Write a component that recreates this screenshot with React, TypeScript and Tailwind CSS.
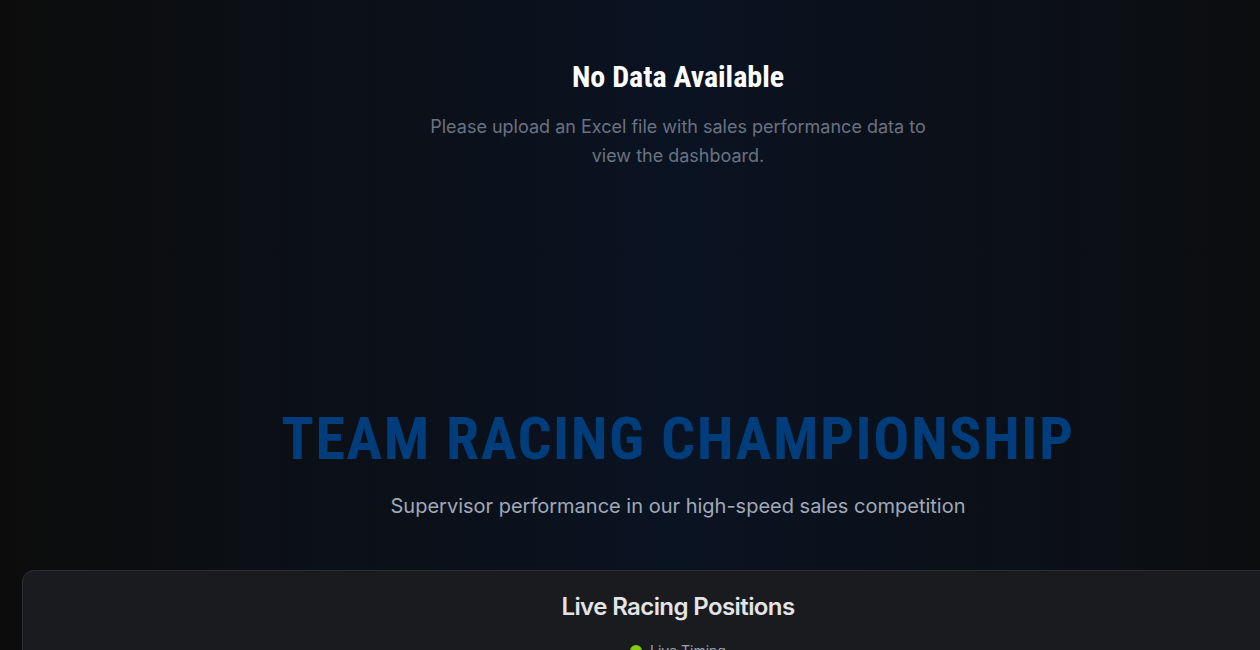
export default function App() {
  return (
    <div className="min-h-screen w-[1356px] overflow-hidden bg-[#0c0c0c] bg-gradient-to-r from-[#0c0c0c] via-[#0a1322] to-[#0c0c0c] font-['Inter',sans-serif]">
      {/* Empty state */}
      <div className="flex flex-col items-center pt-[59px] text-center">
        <h2 className="font-['Roboto_Condensed','Roboto',sans-serif] text-3xl font-bold text-white">
          No Data Available
        </h2>
        <p className="mt-[17px] max-w-[512px] text-lg leading-[29px] text-[#6b7280]">
          Please upload an Excel file with sales performance data to view the dashboard.
        </p>
      </div>

      {/* Hero */}
      <div className="mt-[239px] flex flex-col items-center text-center">
        <h1 className="font-['Roboto_Condensed','Roboto',sans-serif] text-6xl leading-none font-bold tracking-wide text-[#003d7a]">
          TEAM RACING CHAMPIONSHIP
        </h1>
        <p className="mt-[23px] text-xl text-[#a1a9b8]">
          Supervisor performance in our high-speed sales competition
        </p>
      </div>

      {/* Positions card */}
      <div className="mx-[22px] mt-[50px] rounded-xl border border-[#2c2e33] bg-[#1a1b1e] pt-[20px] pb-10">
        <h3 className="text-center text-2xl font-semibold tracking-tight text-[#e4e4e7]">Live Racing Positions</h3>
        <div className="mt-[18px] flex items-center justify-center gap-2 text-sm text-[#9ca3af]">
          <span className="h-3 w-3 rounded-full bg-[#84cc16]" />
          <span>Live Timing</span>
        </div>
      </div>
    </div>
  )
}
